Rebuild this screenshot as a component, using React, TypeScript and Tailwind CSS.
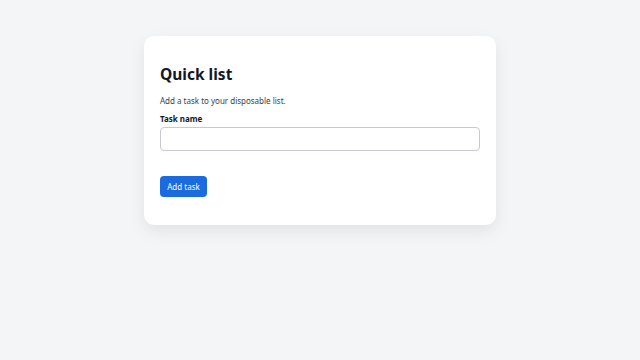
export default function App() {
  return (
    <div
      className="min-h-screen w-full bg-[#f4f5f7] pt-9"
      style={{ fontFamily: '"Noto Sans", "Open Sans", sans-serif' }}
    >
      <div className="mx-auto w-[352px] rounded-[10px] bg-white px-4 pt-[29px] pb-7 shadow-[0_6px_16px_rgba(0,0,0,0.08)]">
        <h1 className="text-[15.5px] font-bold leading-tight text-[#111827]">Quick list</h1>
        <p className="mt-[11px] text-[8px] leading-[12px] text-[#374151]">
          Add a task to your disposable list.
        </p>
        <label className="mt-[6px] block text-[8px] leading-[12px] font-bold text-[#111827]">
          Task name
        </label>
        <input
          type="text"
          className="mt-[2px] block h-[24px] w-full rounded-[4px] border border-[#c7cad1] bg-white px-2 text-[9px] outline-none"
        />
        <button className="mt-[25px] h-[21px] w-[47px] rounded-[4px] bg-[#1a6ae0] text-[8px] text-white">
          Add task
        </button>
      </div>
    </div>
  );
}
